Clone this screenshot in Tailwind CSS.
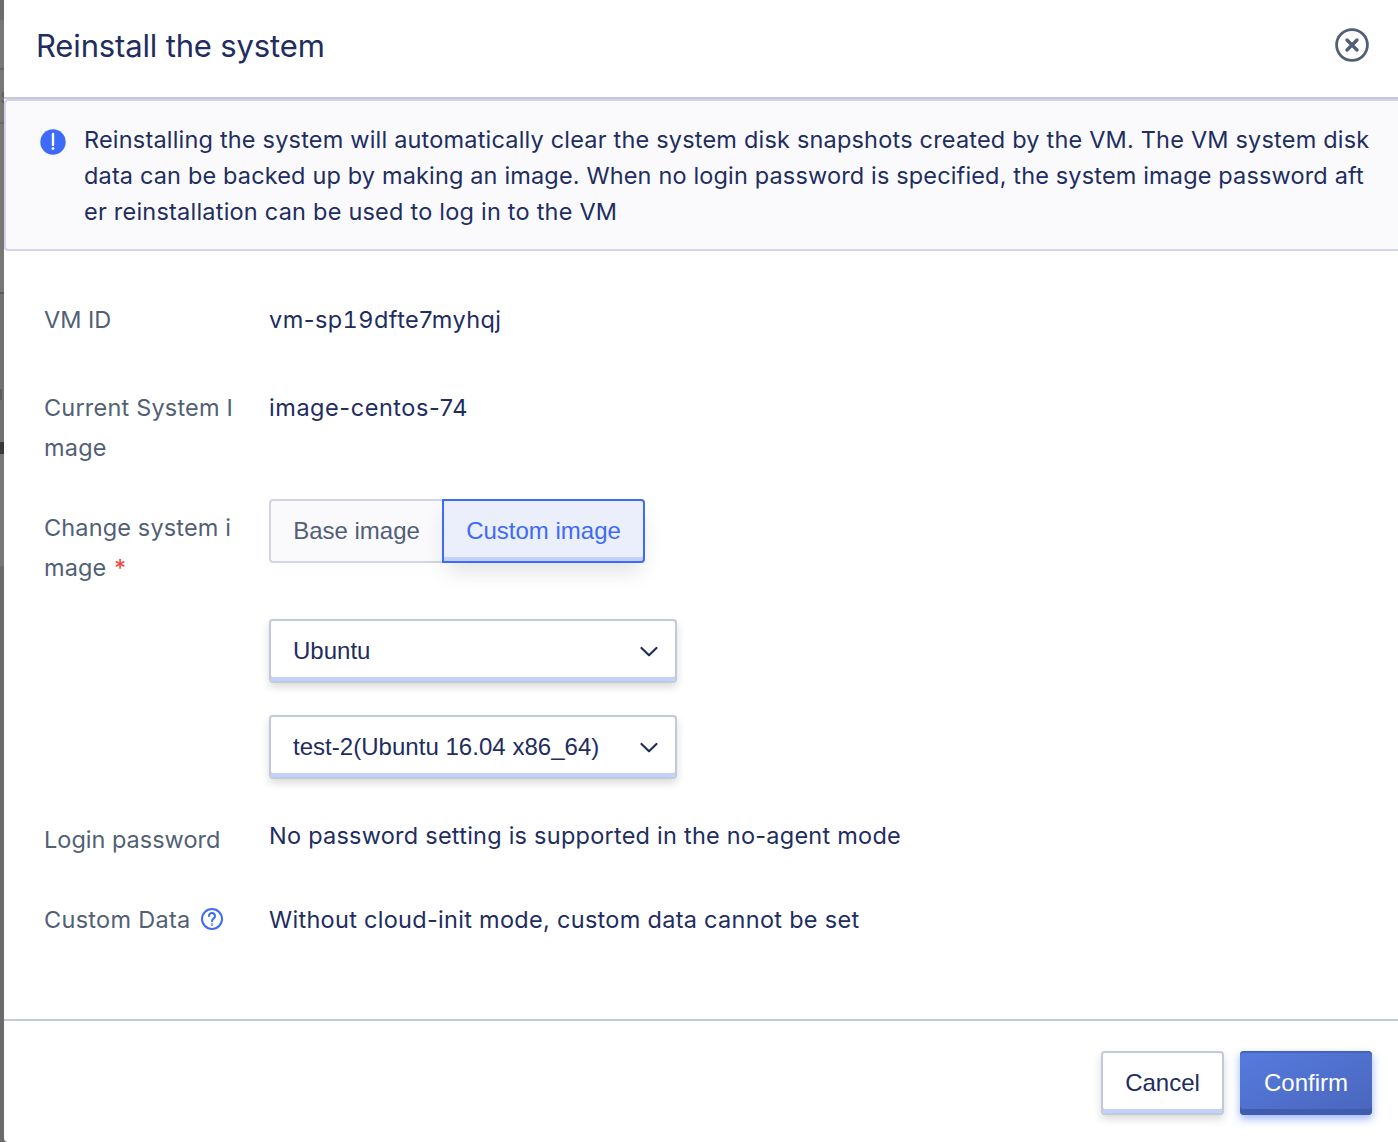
<!DOCTYPE html>
<html lang="en">
<head>
<meta charset="utf-8">
<title>Reinstall the system</title>
<script src="https://cdn.jsdelivr.net/npm/@tailwindcss/browser@4"></script>
</head>
<body class="flex h-[1142px] w-[1398px] overflow-hidden bg-[#6b6b6c] font-[Inter,sans-serif] text-[23.5px] text-[#212d60]">
<div class="flex w-1 shrink-0 flex-col overflow-hidden bg-[#787776]">
  <div class="h-5 bg-[#6d6b6e]"></div>
  <div class="h-12"></div>
  <div class="h-0.5 bg-[#666668]"></div>
  <div class="flex h-[52px] items-center justify-start text-[#5c5c5e]">s</div>
  <div class="h-0.5 bg-[#686869]"></div>
  <div class="h-[168px]"></div>
  <div class="h-0.5 bg-[#5c5c5e]"></div>
  <div class="flex h-[148px] items-center bg-[#727173] pt-[52px]"><div class="h-[11px] w-0.5 bg-[#5d5d60]"></div></div>
  <div class="h-3 bg-[#3b3937]"></div>
  <div class="h-28 bg-[#787776]"></div>
  <div class="grow bg-[#6b6b6c]"></div>
</div>
<main class="flex min-w-0 grow flex-col rounded-bl bg-white">
  <header class="flex h-[99px] shrink-0 items-center justify-between border-b-2 border-[#c3c8da] pr-[29px] pb-[5px] pl-8">
    <h1 class="text-[31px] tracking-[-0.15px] whitespace-nowrap">Reinstall the system</h1>
    <svg class="-mt-0.5 size-[34px]" viewBox="0 0 34 34" fill="none" stroke="#525f75" stroke-linecap="round"><circle cx="17" cy="17" r="15.4" stroke-width="2.8"/><path d="M12 12l10 10M22 12L12 22" stroke-width="3.4"/></svg>
  </header>
  <section class="flex h-[152px] shrink-0 gap-[18px] rounded-l-sm border-2 border-r-0 border-[#d2d5e9] bg-[#fafafc] pt-[21px] pl-[34px]">
    <svg class="mt-[7px] size-[26px] shrink-0" viewBox="0 0 26 26"><circle cx="13" cy="13" r="12.7" fill="#3d6bf8"/><path d="M13 5v11" stroke="#fff" stroke-width="2.4" stroke-linecap="round"/><circle cx="13" cy="19.6" r="1.4" fill="#fff"/></svg>
    <p class="leading-9 whitespace-nowrap"><span class="tracking-[0.19px]">Reinstalling the system will automatically clear the system disk snapshots created by the VM. The VM system disk</span><br><span class="tracking-[0.15px]">data can be backed up by making an image. When no login password is specified, the system image password aft</span><br><span class="tracking-[0.22px]">er reinstallation can be used to log in to the VM</span></p>
  </section>
  <form class="flex h-[768px] shrink-0 flex-col pt-[49px] pl-10 leading-10 tracking-[0.24px] whitespace-nowrap">
    <div class="flex h-[88px]"><div class="w-[225px] tracking-normal text-[#525f75]">VM ID</div><div class="tracking-[0.44px]">vm-sp<span class="tabular-nums">19</span>dfte7myhqj</div></div>
    <div class="flex h-[111px]"><div class="w-[225px] tracking-[0.19px] text-[#525f75]">Current System I<br>mage</div><div class="tracking-[0.55px]">image-centos-74</div></div>
    <div class="flex h-[317px]">
      <div class="w-[225px] pt-[9px] tracking-[0.14px] text-[#525f75]">Change system i<br>mage <span class="ml-px text-[#f0413a]">*</span></div>
      <div class="flex flex-col font-['Liberation_Sans',sans-serif] text-2xl leading-none tracking-normal">
        <div class="flex h-16">
          <button type="button" class="w-[173px] rounded-l border-2 border-r-0 border-[#d2d5e9] bg-[#fafafc] text-[#525f75]">Base image</button>
          <button type="button" class="w-[203px] rounded-r border-2 border-[#3d6bf8] bg-[#ebeffb] text-[#3d6bf8] shadow-[inset_0_-4px_0_#c3d1f7,0_12px_22px_-4px_rgba(0,0,0,0.12)]">Custom image</button>
        </div>
        <div class="mt-14 flex h-16 w-[408px] items-center justify-between rounded border-2 border-[#c3c8da] pr-4 pl-[22px] shadow-[inset_0_-4px_0_#c4d2f7,0_4px_8px_rgba(0,0,0,0.15)]">Ubuntu<svg class="size-[20px]" viewBox="0 0 20 20" fill="none" stroke="#212d60" stroke-width="2.2" stroke-linecap="round" stroke-linejoin="round"><path d="M2.5 7l7.5 7.3L17.500 7"/></svg></div>
        <div class="mt-8 flex h-16 w-[408px] items-center justify-between rounded border-2 border-[#c3c8da] pr-4 pl-[22px] tracking-[0.03px] shadow-[inset_0_-4px_0_#c4d2f7,0_4px_8px_rgba(0,0,0,0.15)]">test-2(Ubuntu 16.04 x86_64)<svg class="size-[20px]" viewBox="0 0 20 20" fill="none" stroke="#212d60" stroke-width="2.2" stroke-linecap="round" stroke-linejoin="round"><path d="M2.5 7l7.5 7.3L17.500 7"/></svg></div>
      </div>
    </div>
    <div class="flex h-[84px]"><div class="w-[225px] pt-1 tracking-normal text-[#525f75]">Login password</div><div>No password setting is supported in the no-agent mode</div></div>
    <div class="flex tracking-[0.29px]"><div class="flex w-[225px] items-center text-[#525f75]">Custom Data<svg class="-mt-0.5 ml-2.5 size-[22px]" viewBox="0 0 22 22" fill="none" stroke="#3d6bf8" stroke-width="2" stroke-linecap="round"><circle cx="11" cy="11" r="10"/><path d="M8 8a3 3 0 1 1 4.700 2.400C11.500 11.300 11 11.800 11 13.200"/><circle cx="11" cy="16.600" r=".3"/></svg></div><div>Without cloud-init mode, custom data cannot be set</div></div>
  </form>
  <footer class="flex grow justify-end gap-4 border-t-2 border-[#c3c8da] pt-[30px] pr-[26px] font-['Liberation_Sans',sans-serif] text-2xl">
    <button type="button" class="h-16 w-[123px] rounded border-2 border-[#c3c8da] bg-white shadow-[inset_0_-4px_0_#c4d2f7,0_4px_8px_rgba(0,0,0,0.15)]">Cancel</button>
    <button type="button" class="h-16 w-[132px] rounded bg-linear-to-br from-[#567be0] to-[#4966bb] text-white shadow-[inset_0_-6px_0_#405cac,inset_0_2px_0_#4563bd,0_4px_8px_rgba(61,107,248,0.5)]">Confirm</button>
  </footer>
</main>
</body>
</html>
